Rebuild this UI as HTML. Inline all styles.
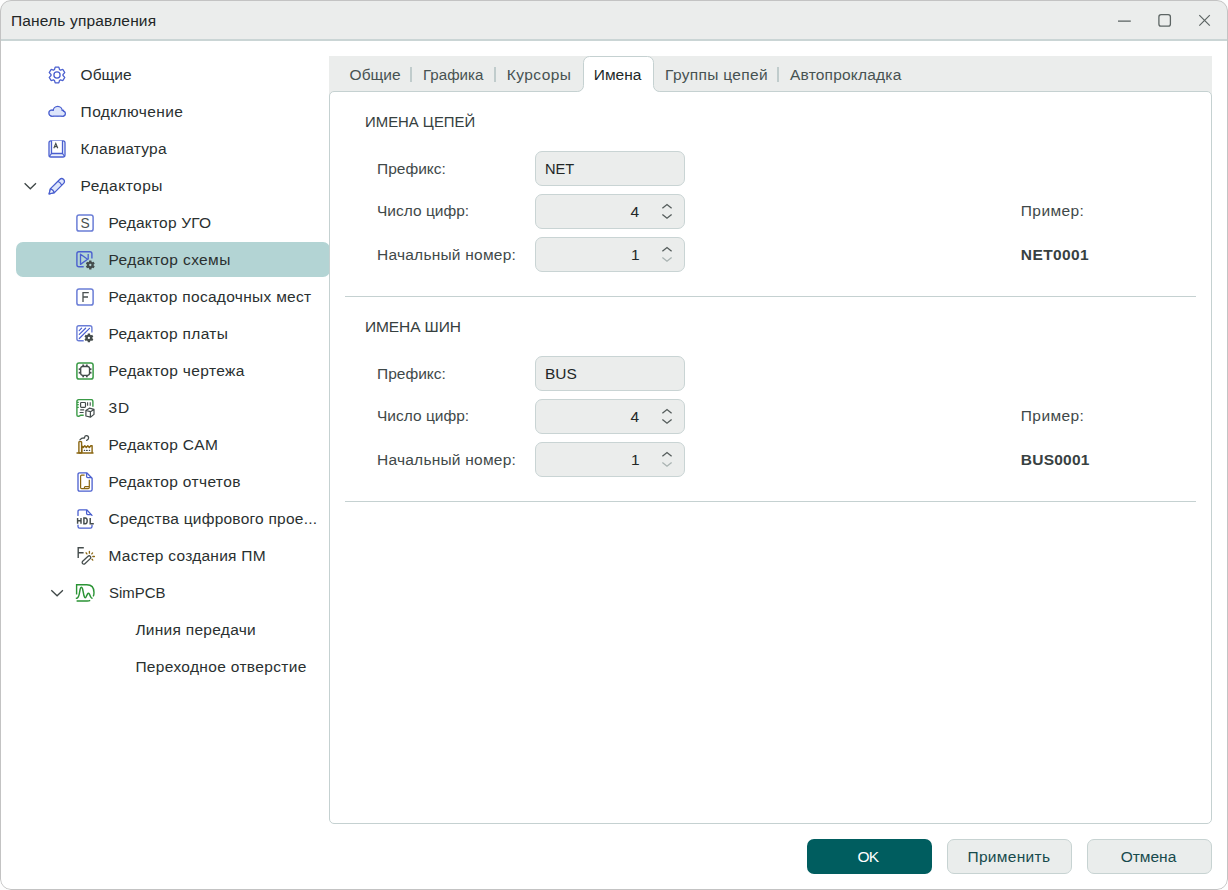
<!DOCTYPE html><html><head><meta charset="utf-8"><style>

*{margin:0;padding:0;box-sizing:border-box}
html,body{width:1228px;height:890px;overflow:hidden;background:#fdfdfd}
#win{position:absolute;left:0;top:0;width:1228px;height:890px;border-radius:11px;background:#fff;overflow:hidden}
#wb{position:absolute;left:0;top:0;width:1228px;height:890px;border:1px solid #c3c3c3;border-radius:11px;pointer-events:none}
.abs{position:absolute}
#title{position:absolute;left:0;top:0;width:1228px;height:39px;background:#ebedec}
#tsep{position:absolute;left:0;top:39px;width:1228px;height:2px;background:#cad5d5}
.t{position:absolute;font-family:"Liberation Sans",sans-serif;font-size:15.5px;line-height:20px;white-space:pre;color:#1e2424}
.ttl{color:#222626}
.side{color:#2a3030}
.tab{color:#475252}
.tabact{color:#222828}
.hdr{color:#364040}
.lbl{color:#3f4949}
.val{color:#222727}
.ex{font-weight:700;color:#384141}
.okt{color:#fff}
.btt{color:#174a4c}
.ic{position:absolute;overflow:visible}
#hl{position:absolute;left:16px;top:242px;width:314px;height:35px;border-radius:7px;background:#b3d4d4}
#tabbar{position:absolute;left:329px;top:56px;width:883px;height:41px;background:#ebedec}
#pane{position:absolute;left:329px;top:91px;width:883px;height:733px;border:1px solid #c5d1d1;border-radius:5px;background:#fff}
#acttab{position:absolute;left:583px;top:56px;width:71px;height:37px;border:1px solid #c5d1d1;border-bottom:none;border-radius:7px 7px 0 0;background:#fff}
.corner{position:absolute;width:6px;height:6px;top:86px}
.sep{position:absolute;width:2px;height:15px;top:67px;background:#c0cccc}
.box{position:absolute;left:535px;width:150px;height:35px;border:1px solid #c9d4d4;border-radius:7px;background:#ebedec}
.hr{position:absolute;left:345px;width:851px;height:1px;background:#c5d1d1}
.btn{position:absolute;top:839px;width:125px;height:35px;border-radius:7px}
.bg{background:#eaedec;border:1px solid #c7d3d2}
.bok{background:#005d5f}

</style></head><body><div id="win">
<div id="title"></div><div id="tsep"></div>
<div id="hl"></div>
<div id="tabbar"></div><div id="pane"></div>
<svg class="ic" style="left:560px;top:50px" width="120" height="50" viewBox="560 50 120 50"><path d="M577.5 91.5 A6 6 0 0 0 583.5 85.5 V62.5 A6 6 0 0 1 589.5 56.5 H647.5 A6 6 0 0 1 653.5 62.5 V85.5 A6 6 0 0 0 659.5 91.5 V93 H577.5 Z" fill="#fff"/><path d="M577.5 91.5 A6 6 0 0 0 583.5 85.5 V62.5 A6 6 0 0 1 589.5 56.5 H647.5 A6 6 0 0 1 653.5 62.5 V85.5 A6 6 0 0 0 659.5 91.5" fill="none" stroke="#c5d1d1" stroke-width="1"/></svg>
<div class="sep" style="left:410px"></div>
<div class="sep" style="left:494px"></div>
<div class="sep" style="left:777px"></div>
<div class="box" style="top:151px"></div>
<div class="box" style="top:194px"></div>
<div class="box" style="top:237px"></div>
<svg class="ic" style="left:655px;top:203px" width="24" height="24" viewBox="0 0 24 24"><path d="M7.4 5.2 L12 1.5 L16.6 5.2" fill="none" stroke="#545c5b" stroke-width="1.3"/><path d="M7.4 11.5 L12 15.2 L16.6 11.5" fill="none" stroke="#545c5b" stroke-width="1.3"/></svg>
<svg class="ic" style="left:655px;top:246px" width="24" height="24" viewBox="0 0 24 24"><path d="M7.4 5.2 L12 1.5 L16.6 5.2" fill="none" stroke="#545c5b" stroke-width="1.3"/><path d="M7.4 11.5 L12 15.2 L16.6 11.5" fill="none" stroke="#a9b3b2" stroke-width="1.3"/></svg>
<div class="hr" style="top:296px"></div>
<div class="box" style="top:356px"></div>
<div class="box" style="top:399px"></div>
<div class="box" style="top:442px"></div>
<svg class="ic" style="left:655px;top:408px" width="24" height="24" viewBox="0 0 24 24"><path d="M7.4 5.2 L12 1.5 L16.6 5.2" fill="none" stroke="#545c5b" stroke-width="1.3"/><path d="M7.4 11.5 L12 15.2 L16.6 11.5" fill="none" stroke="#545c5b" stroke-width="1.3"/></svg>
<svg class="ic" style="left:655px;top:451px" width="24" height="24" viewBox="0 0 24 24"><path d="M7.4 5.2 L12 1.5 L16.6 5.2" fill="none" stroke="#545c5b" stroke-width="1.3"/><path d="M7.4 11.5 L12 15.2 L16.6 11.5" fill="none" stroke="#a9b3b2" stroke-width="1.3"/></svg>
<div class="hr" style="top:501px"></div>
<div class="btn bok" style="left:807px"></div><div class="btn bg" style="left:947px"></div><div class="btn bg" style="left:1087px"></div>
<div class="t ttl" style="left:11.0px;top:11px;letter-spacing:0.169px;">Панель управления</div>
<div class="t side" style="left:80.6px;top:65px;">Общие</div>
<div class="t side" style="left:80.6px;top:102px;letter-spacing:0.4px;">Подключение</div>
<div class="t side" style="left:80.6px;top:139px;letter-spacing:0.222px;">Клавиатура</div>
<div class="t side" style="left:80.6px;top:176px;letter-spacing:0.5px;">Редакторы</div>
<div class="t side" style="left:108.5px;top:213px;letter-spacing:0.182px;">Редактор УГО</div>
<div class="t side" style="left:108.5px;top:250px;letter-spacing:0.385px;">Редактор схемы</div>
<div class="t side" style="left:108.5px;top:287px;letter-spacing:0.304px;">Редактор посадочных мест</div>
<div class="t side" style="left:108.5px;top:324px;letter-spacing:0.338px;">Редактор платы</div>
<div class="t side" style="left:108.5px;top:361px;letter-spacing:0.367px;">Редактор чертежа</div>
<div class="t side" style="left:108.5px;top:398px;letter-spacing:1.0px;">3D</div>
<div class="t side" style="left:108.5px;top:435px;letter-spacing:0.364px;">Редактор CAM</div>
<div class="t side" style="left:108.5px;top:472px;letter-spacing:0.367px;">Редактор отчетов</div>
<div class="t side" style="left:108.5px;top:509px;letter-spacing:0.24px;">Средства цифрового прое...</div>
<div class="t side" style="left:108.5px;top:546px;letter-spacing:0.259px;">Мастер создания ПМ</div>
<div class="t side" style="left:108.5px;top:583px;transform:scaleX(0.9649);transform-origin:1px 0;">SimPCB</div>
<div class="t side" style="left:135.4px;top:620px;letter-spacing:0.277px;">Линия передачи</div>
<div class="t side" style="left:135.4px;top:657px;letter-spacing:0.337px;">Переходное отверстие</div>
<div class="t tab" style="left:349.6px;top:65px;">Общие</div>
<div class="t tab" style="left:422.6px;top:65px;transform:scaleX(0.9738);transform-origin:1px 0;">Графика</div>
<div class="t tab" style="left:506.8px;top:65px;letter-spacing:0.433px;">Курсоры</div>
<div class="t tabact" style="left:593.8px;top:65px;">Имена</div>
<div class="t tab" style="left:665.1px;top:65px;letter-spacing:0.327px;">Группы цепей</div>
<div class="t tab" style="left:790.0px;top:65px;letter-spacing:0.208px;">Автопрокладка</div>
<div class="t hdr" style="left:365.0px;top:112px;transform:scaleX(0.9602);transform-origin:1px 0;">ИМЕНА ЦЕПЕЙ</div>
<div class="t lbl" style="left:377.0px;top:159px;">Префикс:</div>
<div class="t lbl" style="left:377.0px;top:201px;">Число цифр:</div>
<div class="t lbl" style="left:377.0px;top:245px;letter-spacing:0.233px;">Начальный номер:</div>
<div class="t val" style="left:545.0px;top:159px;transform:scaleX(0.9433);transform-origin:1px 0;">NET</div>
<div class="t lbl" style="left:1020.8px;top:201px;letter-spacing:0.417px;">Пример:</div>
<div class="t ex" style="left:1020.8px;top:245px;letter-spacing:0.4px;">NET0001</div>
<div class="t hdr" style="left:365.0px;top:317px;letter-spacing:-0.113px;">ИМЕНА ШИН</div>
<div class="t lbl" style="left:377.0px;top:364px;">Префикс:</div>
<div class="t lbl" style="left:377.0px;top:406px;">Число цифр:</div>
<div class="t lbl" style="left:377.0px;top:450px;letter-spacing:0.233px;">Начальный номер:</div>
<div class="t val" style="left:545.0px;top:364px;">BUS</div>
<div class="t lbl" style="left:1020.8px;top:406px;letter-spacing:0.417px;">Пример:</div>
<div class="t ex" style="left:1020.8px;top:450px;letter-spacing:0.233px;">BUS0001</div>
<div class="t okt" style="left:857.6px;top:847px;letter-spacing:-0.8px;">OK</div>
<div class="t btt" style="left:967.5px;top:847px;letter-spacing:0.3px;">Применить</div>
<div class="t btt" style="left:1120.7px;top:847px;">Отмена</div>
<div class="t val" style="left:630.5px;top:202px">4</div>
<div class="t val" style="left:631px;top:245px">1</div>
<div class="t val" style="left:630.5px;top:407px">4</div>
<div class="t val" style="left:631px;top:450px">1</div>
<svg class="ic" style="left:44px;top:62px" width="26" height="26" viewBox="0 0 26 26"><path d="M11.18 5.11 L14.82 5.11 L15.54 7.56 L16.44 8.09 L18.92 7.48 L20.75 10.63 L18.98 12.48 L18.98 13.52 L20.75 15.37 L18.92 18.52 L16.44 17.91 L15.54 18.44 L14.82 20.89 L11.18 20.89 L10.46 18.44 L9.56 17.91 L7.08 18.52 L5.25 15.37 L7.02 13.52 L7.02 12.48 L5.25 10.63 L7.08 7.48 L9.56 8.09 L10.46 7.56Z" fill="none" stroke="#4a5fcf" stroke-width="1.3" stroke-linejoin="round"/><circle cx="13" cy="13" r="3.1" fill="none" stroke="#4a5fcf" stroke-width="1.3"/></svg>
<svg class="ic" style="left:44px;top:99px" width="26" height="26" viewBox="0 0 26 26"><g fill="#4a5fcf" stroke="#4a5fcf" stroke-width="2.6"><circle cx="7.9" cy="14.1" r="2.4"/><circle cx="13.7" cy="12" r="3.9"/><circle cx="18.8" cy="14.6" r="1.9"/><rect x="7.9" y="12" width="10.9" height="4.5"/></g><g fill="#dde5fb"><circle cx="7.9" cy="14.1" r="2.4"/><circle cx="13.7" cy="12" r="3.9"/><circle cx="18.8" cy="14.6" r="1.9"/><rect x="7.9" y="12" width="10.9" height="4.5"/></g></svg>
<svg class="ic" style="left:44px;top:136px" width="26" height="26" viewBox="0 0 26 26"><path d="M5 6.8 Q5 4.8 7 4.8 H19 Q21 4.8 21 6.8 V19.3 Q21 21 19.3 21 H6.7 Q5 21 5 19.3 Z" fill="#dde5fb" fill-opacity="0.55" stroke="#4a5fcf" stroke-width="1.3"/><path d="M7.5 4.8 V17.5 H18.5 V4.8" fill="#fff" stroke="#4a5fcf" stroke-width="1.3"/><path d="M7.5 17.5 L5.2 20.6 M18.5 17.5 L20.8 20.6" stroke="#4a5fcf" stroke-width="1.1"/><path d="M9.8 12.3 L11.8 7.5 L13.8 12.3 M10.6 10.6 H13" fill="none" stroke="#444c4c" stroke-width="1.1"/></svg>
<svg class="ic" style="left:44px;top:173px" width="26" height="26" viewBox="0 0 26 26"><g transform="translate(4.8 21.3) rotate(-45)"><path d="M0.5 0 L5.2 -2.8 H18.2 A2.8 2.8 0 0 1 18.2 2.8 H5.2 Z" fill="#dde5fb" stroke="#4a5fcf" stroke-width="1.3" stroke-linejoin="round"/><path d="M15.6 -2.8 Q16.6 0 15.6 2.8" fill="none" stroke="#4a5fcf" stroke-width="1.2"/><path d="M0.5 0 L5.2 -2.8 Q6.2 0 5.2 2.8 Z" fill="#f4f6fe" stroke="#4a5fcf" stroke-width="1.3" stroke-linejoin="round"/></g></svg>
<svg class="ic" style="left:20px;top:176px" width="20" height="20" viewBox="0 0 20 20"><path d="M4.6 7.2 L10.3 12.8 L16 7.2" fill="none" stroke="#3f4747" stroke-width="1.3"/></svg>
<svg class="ic" style="left:72px;top:210px" width="26" height="26" viewBox="0 0 26 26"><rect x="4.9" y="4.9" width="16.2" height="16.2" rx="2.2" fill="none" stroke="#6a7dd6" stroke-width="1.5"/><text x="13.1" y="17.7" font-family="Liberation Sans" font-size="13.8" fill="#4a5151" text-anchor="middle">S</text></svg>
<svg class="ic" style="left:72px;top:247px" width="26" height="26" viewBox="0 0 26 26"><path d="M11.7 19.7 H6.9 Q4.9 19.7 4.9 17.7 V6.8 Q4.9 4.8 6.9 4.8 H17.9 Q19.9 4.8 19.9 6.8 V11.5" fill="none" stroke="#4a5fcf" stroke-width="1.4"/><path d="M8.5 7.2 V17.4 L15.6 12.3 Z" fill="none" stroke="#4a5fcf" stroke-width="1.3" stroke-linejoin="round"/><path d="M16.2 7 V12.4" stroke="#4a5fcf" stroke-width="1.3"/><path d="M17.19 13.54 L19.41 13.54 L19.57 14.85 L20.39 15.32 L21.61 14.80 L22.72 16.73 L21.67 17.53 L21.67 18.47 L22.72 19.27 L21.61 21.20 L20.39 20.68 L19.57 21.15 L19.41 22.46 L17.19 22.46 L17.03 21.15 L16.21 20.68 L14.99 21.20 L13.88 19.27 L14.93 18.47 L14.93 17.53 L13.88 16.73 L14.99 14.80 L16.21 15.32 L17.03 14.85Z" fill="#444c4c" stroke="#b3d4d4" stroke-width="1.4" stroke-linejoin="round" paint-order="stroke"/><circle cx="18.3" cy="18" r="1.15" fill="#b3d4d4"/></svg>
<svg class="ic" style="left:72px;top:284px" width="26" height="26" viewBox="0 0 26 26"><rect x="4.9" y="4.9" width="16.2" height="16.2" rx="2.2" fill="none" stroke="#6a7dd6" stroke-width="1.5"/><path d="M11 17.9 V8.6 H16.8 M11 13 H16" fill="none" stroke="#4a5151" stroke-width="1.3"/></svg>
<svg class="ic" style="left:72px;top:321px" width="26" height="26" viewBox="0 0 26 26"><path d="M11.7 19.7 H6.9 Q4.9 19.7 4.9 17.7 V6.8 Q4.9 4.8 6.9 4.8 H17.9 Q19.9 4.8 19.9 6.8 V11.5" fill="none" stroke="#6a7dd6" stroke-width="1.4"/><path d="M7.2 9.6 L9.6 7.2 M7.3 13.4 L13.6 7.2 M7.3 17.5 L17.5 7.3" stroke="#4a5fcf" stroke-width="1.2" stroke-linecap="round"/><path d="M15.79 12.44 L18.01 12.44 L18.17 13.75 L18.99 14.22 L20.21 13.70 L21.32 15.63 L20.27 16.43 L20.27 17.37 L21.32 18.17 L20.21 20.10 L18.99 19.58 L18.17 20.05 L18.01 21.36 L15.79 21.36 L15.63 20.05 L14.81 19.58 L13.59 20.10 L12.48 18.17 L13.53 17.37 L13.53 16.43 L12.48 15.63 L13.59 13.70 L14.81 14.22 L15.63 13.75Z" fill="#444c4c" stroke="#ffffff" stroke-width="1.4" stroke-linejoin="round" paint-order="stroke"/><circle cx="16.9" cy="16.9" r="1.15" fill="#ffffff"/></svg>
<svg class="ic" style="left:72px;top:358px" width="26" height="26" viewBox="0 0 26 26"><rect x="4.9" y="4.9" width="16.2" height="16.2" rx="2.2" fill="none" stroke="#3a9a46" stroke-width="1.5"/><rect x="8.7" y="8.5" width="8.8" height="8.8" rx="2.1" fill="none" stroke="#444c4c" stroke-width="1.3"/><rect x="10.299999999999999" y="6.5" width="1.8" height="1.8" fill="#444c4c"/><rect x="13.9" y="6.5" width="1.8" height="1.8" fill="#444c4c"/><rect x="10.299999999999999" y="17.5" width="1.8" height="1.8" fill="#444c4c"/><rect x="13.9" y="17.5" width="1.8" height="1.8" fill="#444c4c"/><rect x="6.699999999999999" y="10.299999999999999" width="1.8" height="1.8" fill="#444c4c"/><rect x="6.699999999999999" y="13.799999999999999" width="1.8" height="1.8" fill="#444c4c"/><rect x="17.700000000000003" y="10.299999999999999" width="1.8" height="1.8" fill="#444c4c"/><rect x="17.700000000000003" y="13.799999999999999" width="1.8" height="1.8" fill="#444c4c"/></svg>
<svg class="ic" style="left:72px;top:395px" width="26" height="26" viewBox="0 0 26 26"><path d="M11.7 20.2 H8.8 Q8.2 20.2 7.8 20.8 Q7.4 21.3 6.8 21.3 H6.2 Q4.9 21.3 4.9 20 V6.2 Q4.9 5.6 5.5 5.2 Q6 4.6 6.6 4.6 H19.8 Q20.9 5.4 20.9 6.4 V11.8" fill="none" stroke="#3a9a46" stroke-width="1.4"/><path d="M5 7.4 L6.8 7.4 M5 9.6 L6.8 9.6 M5 12.4 L6.8 12.4" stroke="#3a9a46" stroke-width="1.2"/><rect x="8.6" y="7.5" width="4.9" height="4.9" rx="0.8" fill="none" stroke="#444c4c" stroke-width="1.2"/><path d="M15.6 7.2 V10.8 M18.2 7.2 V10.8" stroke="#444c4c" stroke-width="1.1"/><path d="M8.2 14.9 H12.2 M7.6 17.5 H11.6" stroke="#444c4c" stroke-width="1.1"/><path d="M13.9 15.5 L17.4 13.2 L22 14.4 V19.4 L18.4 22.2 L13.9 21 Z M13.9 15.5 L18.4 16.7 L22 14.4 M18.4 16.7 V22.2" fill="#fff" stroke="#444c4c" stroke-width="1.2" stroke-linejoin="round"/></svg>
<svg class="ic" style="left:72px;top:432px" width="26" height="26" viewBox="0 0 26 26"><path d="M4.5 21 H21.5" stroke="#8a6612" stroke-width="1.5"/><rect x="6.9" y="9.6" width="2.7" height="11.4" rx="0.6" fill="none" stroke="#8a6612" stroke-width="1.4"/><path d="M9.8 21 V14 L11.3 15.6 L12.8 13.7 L14.3 15.6 L15.8 13.7 L17.3 15.6 L18.8 13.7 L20.1 13.7 V21" fill="none" stroke="#8a6612" stroke-width="1.4" stroke-linejoin="round"/><path d="M7.9 7.9 Q9.5 5.9 11.9 6.0 Q12.6 6.3 12.6 5.4 Q12.8 3.6 14.5 3.7 Q16.6 3.9 16.6 6.0 Q16.5 7.6 14.7 8.4" fill="none" stroke="#444c4c" stroke-width="1.25" stroke-linecap="round"/><path d="M12.4 18.4 H12.6 M14.6 18.4 H15.2 M17.4 18.4 H17.6" stroke="#444c4c" stroke-width="1.3" stroke-linecap="round"/></svg>
<svg class="ic" style="left:72px;top:469px" width="26" height="26" viewBox="0 0 26 26"><path d="M7.6 3.8 H14.7 L20.1 9.3 V20.6 Q20.1 22.2 18.5 22.2 H7.6 Q6 22.2 6 20.6 V5.4 Q6 3.8 7.6 3.8 Z" fill="none" stroke="#4a5fcf" stroke-width="1.3" stroke-linejoin="round"/><path d="M14.6 4 V7.6 Q14.6 8.7 15.7 8.7 H19.8" fill="none" stroke="#4a5fcf" stroke-width="1.3"/><path d="M12.6 6.2 H9.6 Q8.6 6.2 8.6 7.2 V18.6 Q8.6 19.7 9.6 19.7 H16.2 Q17.3 19.7 17.3 18.6 V10.8 M17.3 17.6 H13.3 Q12.4 17.6 12.4 18.6 V19.6" fill="none" stroke="#8a6612" stroke-width="1.2"/></svg>
<svg class="ic" style="left:72px;top:506px" width="26" height="26" viewBox="0 0 26 26"><path d="M6 9.4 V5.4 Q6 3.8 7.6 3.8 H14.7 L20 9.4" fill="none" stroke="#4a5fcf" stroke-width="1.3" stroke-linejoin="round" stroke-linecap="round"/><path d="M14.6 4 V7.6 Q14.6 8.7 15.7 8.7 H19.6" fill="none" stroke="#4a5fcf" stroke-width="1.3"/><path d="M6 19.2 V20.6 Q6 22.2 7.6 22.2 H18.4 Q20 22.2 20 20.6 V19.2" fill="none" stroke="#4a5fcf" stroke-width="1.3" stroke-linecap="round"/><path d="M5.6 11.9 V17.7 M9.0 11.9 V17.7 M5.6 14.8 H9.0 M11.9 11.9 V17.7 H13.3 Q15.2 17.7 15.2 14.8 Q15.2 11.9 13.3 11.9 Z M18.2 11.9 V17.7 H21.8" fill="none" stroke="#444c4c" stroke-width="1.45"/></svg>
<svg class="ic" style="left:72px;top:543px" width="26" height="26" viewBox="0 0 26 26"><path d="M6.2 15 V4.8 H11.8 M6.2 9.8 H11.6" fill="none" stroke="#444c4c" stroke-width="1.4"/><g transform="translate(10.6 20.6) rotate(-43)"><rect x="0" y="-1.6" width="10.6" height="3.2" rx="1.6" fill="#fff" stroke="#444c4c" stroke-width="1.3"/></g><path d="M17.4 8.5 L17.4 10.2" stroke="#8a6612" stroke-width="1.3" stroke-linecap="round"/><path d="M14.1 9.8 L14.9 10.9" stroke="#8a6612" stroke-width="1.3" stroke-linecap="round"/><path d="M20.6 9.9 L19.8 10.9" stroke="#8a6612" stroke-width="1.3" stroke-linecap="round"/><path d="M20.8 13.5 L22.4 13.5" stroke="#8a6612" stroke-width="1.3" stroke-linecap="round"/><path d="M20 16.3 L20.8 17.1" stroke="#8a6612" stroke-width="1.3" stroke-linecap="round"/></svg>
<svg class="ic" style="left:46px;top:583px" width="20" height="20" viewBox="0 0 20 20"><path d="M5.3 7.3 L11.1 12.8 L16.9 7.3" fill="none" stroke="#3f4747" stroke-width="1.3"/></svg>
<svg class="ic" style="left:72px;top:580px" width="26" height="26" viewBox="0 0 26 26"><path d="M4.6 14.6 V4.7 H14.8 Q22 4.7 22 12.4 Q22 14.8 21.2 16.4 M4.6 21 H15.2 Q17 21 18.2 20.3" fill="none" stroke="#2a9334" stroke-width="1.4"/><path d="M4.4 18.3 Q6.4 18.1 7.3 13.8 L8.2 9.0 Q9.4 5.4 10.6 9.0 L12 15.8 Q13.1 19.6 14.4 16.2 L15.6 13.9 Q16.4 12.3 17.3 13.9 L18.6 16.8 Q19.2 18.2 20 18.2" fill="none" stroke="#2a9334" stroke-width="1.45" stroke-linecap="round" stroke-linejoin="round"/></svg>
<svg class="ic" style="left:1110px;top:8px" width="110" height="28" viewBox="0 0 110 28"><path d="M8 13.1 H20.8" stroke="#596160" stroke-width="1.15"/><rect x="48.9" y="6.7" width="11.5" height="11.5" rx="2.2" fill="none" stroke="#5d6564" stroke-width="1.3"/><path d="M89.3 7.2 L99.8 17.7 M99.8 7.2 L89.3 17.7" stroke="#5d6564" stroke-width="1.2"/></svg>
<div id="wb"></div></div></body></html>
